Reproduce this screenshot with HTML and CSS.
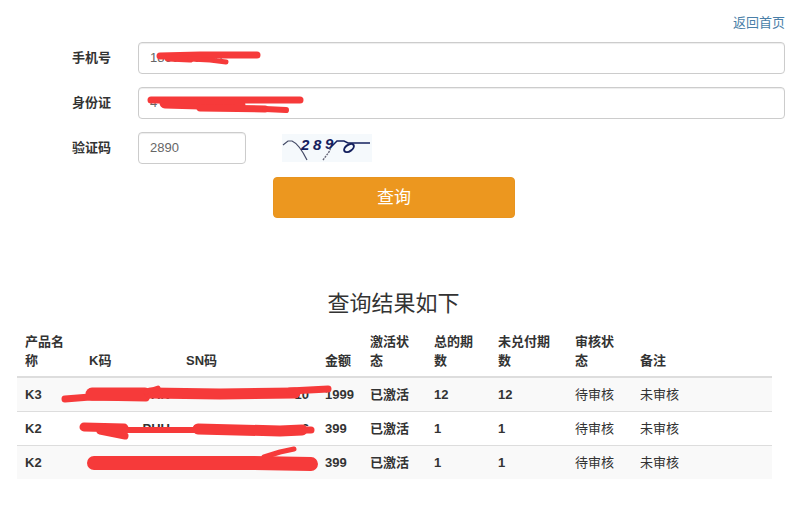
FILE: index.html
```html
<!DOCTYPE html>
<html lang="zh-CN">
    <head>
        <meta charset="utf-8">
        <title>查询结果</title>
        <link rel="stylesheet" href="styles.css">
    </head>
    <body>
        <main class="page">
            <div class="top-link"><a href="#">返回首页</a></div>

            <form class="query-form">
                <div class="form-row">
                    <label>手机号</label>
                    <input class="field" type="text" value="1860000000">
                </div>
                <div class="form-row">
                    <label>身份证</label>
                    <input class="field" type="text" value="4">
                </div>
                <div class="form-row">
                    <label>验证码</label>
                    <input class="field field-short" type="text" value="2890">
                    <svg class="captcha" width="90" height="28" viewBox="0 0 90 28">
                        <rect width="90" height="28" fill="#f5f9fc"></rect>
                        <path d="M1 11 L6 7 L10 7 Q17 10 25 26" fill="none" stroke="#444a66" stroke-width="1.2"></path>
                        <path d="M41 26 L47 18 L50 11" fill="none" stroke="#667" stroke-width="1.4" stroke-dasharray="2 1"></path>
                        <path d="M50 12 L55 7 L62 7 L66 9 L88 9" fill="none" stroke="#14205e" stroke-width="1.5"></path>
                        <ellipse cx="67" cy="14" rx="5.5" ry="3.2" transform="rotate(-35 67 14)" fill="none" stroke="#14205e" stroke-width="2"></ellipse>
                        <text class="captcha-text" x="19" y="16">2</text>
                        <text class="captcha-text" x="31" y="16">8</text>
                        <text class="captcha-text" x="43" y="15">9</text>
                    </svg>
                </div>
                <div class="form-submit">
                    <button class="btn-query" type="button">查询</button>
                </div>
            </form>

            <h2 class="result-title">查询结果如下</h2>

            <table class="result-table">
                <colgroup>
                    <col class="c-name">
                    <col class="c-k">
                    <col class="c-sn">
                    <col class="c-money">
                    <col class="c-active">
                    <col class="c-total">
                    <col class="c-left">
                    <col class="c-audit">
                    <col class="c-note">
                </colgroup>
                <thead>
                    <tr>
                        <th>产品名称</th>
                        <th>K码</th>
                        <th>SN码</th>
                        <th>金额</th>
                        <th>激活状态</th>
                        <th>总的期数</th>
                        <th>未兑付期数</th>
                        <th>审核状态</th>
                        <th>备注</th>
                    </tr>
                </thead>
                <tbody>
                    <tr>
                        <td class="strong">K3</td>
                        <td class="strong code">YIN</td>
                        <td class="strong code">10</td>
                        <td class="strong">1999</td>
                        <td class="strong">已激活</td>
                        <td class="strong">12</td>
                        <td class="strong">12</td>
                        <td>待审核</td>
                        <td>未审核</td>
                    </tr>
                    <tr>
                        <td class="strong">K2</td>
                        <td class="strong code">PHU</td>
                        <td class="strong code">6</td>
                        <td class="strong">399</td>
                        <td class="strong">已激活</td>
                        <td class="strong">1</td>
                        <td class="strong">1</td>
                        <td>待审核</td>
                        <td>未审核</td>
                    </tr>
                    <tr>
                        <td class="strong">K2</td>
                        <td class="strong code"></td>
                        <td class="strong code">2DIAN</td>
                        <td class="strong">399</td>
                        <td class="strong">已激活</td>
                        <td class="strong">1</td>
                        <td class="strong">1</td>
                        <td>待审核</td>
                        <td>未审核</td>
                    </tr>
                </tbody>
            </table>

            <!-- red marker strokes drawn over the private values -->
            <svg class="scribble" width="800" height="507" viewBox="0 0 800 507">
                <g fill="none" stroke="#f63a3a" stroke-linecap="round" stroke-linejoin="round">
                    <path stroke-width="7" d="M160 56 L200 55 L257 55"></path>
                    <path stroke-width="7" d="M168 58 L190 59"></path>
                    <path stroke-width="5" d="M190 59 L210 60 L226 62"></path>
                    <path stroke-width="7" d="M151 100 L180 100 L300 100"></path>
                    <path stroke-width="11" d="M165 103 L200 104 L240 105"></path>
                    <path stroke-width="7" d="M200 108 L265 109"></path>
                    <path stroke-width="6" d="M265 109 L286 110"></path>
                    <path stroke-width="7" d="M65 399 L90 397 L146 398"></path>
                    <path stroke-width="13" d="M92 394 L145 394"></path>
                    <path stroke-width="11" d="M150 393 L220 394 L295 393"></path>
                    <path stroke-width="7" d="M290 391 L328 389"></path>
                    <path stroke-width="5" d="M146 392 L158 388"></path>
                    <path stroke-width="9" d="M84 427 L124 428"></path>
                    <path stroke-width="7" d="M100 431 L125 436"></path>
                    <path stroke-width="6" d="M125 430 L195 430"></path>
                    <path stroke-width="11" d="M198 429 L280 431 L302 430"></path>
                    <path stroke-width="7" d="M298 430 L311 430"></path>
                    <path stroke-width="14" d="M94 463 L150 463 L250 463 L311 464"></path>
                    <path stroke-width="5" d="M264 457 L280 452 L294 449"></path>
                </g>
            </svg>
        </main>
    </body>
</html>
```

FILE: styles.css
```css
* {
    box-sizing: border-box;
}

body {
    margin: 0;
    background-color: #fff;
    color: #333;
    font-family: "Liberation Sans", "Noto Sans CJK SC", sans-serif;
    font-size: 13px;
}

.page {
    position: relative;
    width: 800px;
    height: 507px;
    overflow: hidden;
    padding: 15px 15px 0 17px;
}

.top-link {
    height: 27px;
    line-height: 16px;
    text-align: right;
}
.top-link a {
    color: #4a7fa8;
    text-decoration: none;
}

.form-row {
    display: flex;
    align-items: center;
    margin-bottom: 13px;
    padding-left: 55px;
}
.form-row label {
    width: 66px;
    padding-bottom: 3px;
    font-weight: bold;
}

.field {
    flex: 1;
    height: 32px;
    padding: 0 11px 2px;
    border: 1px solid #ccc;
    border-radius: 4px;
    background-color: #fff;
    color: #666;
    font-family: inherit;
    font-size: 13px;
    box-shadow: inset 0 1px 1px rgba(0, 0, 0, 0.075);
}
.field-short {
    flex: none;
    width: 108px;
}

.captcha {
    margin-left: 36px;
}
.captcha-text {
    fill: #14205e;
    font-family: "Liberation Sans", sans-serif;
    font-size: 15px;
    font-style: italic;
    font-weight: bold;
}

.form-submit {
    display: flex;
    padding-left: 256px;
}
.btn-query {
    width: 242px;
    height: 41px;
    padding: 0 0 4px;
    border: 1px solid #e8941f;
    border-radius: 4px;
    background-color: #ec971f;
    color: #fff;
    font-family: inherit;
    font-size: 17px;
}

.result-title {
    margin: 70px 0 0;
    padding-right: 15px;
    height: 31px;
    line-height: 31px;
    font-size: 22px;
    font-weight: normal;
    text-align: center;
}

.result-table {
    width: 755px;
    margin-top: 5px;
    border-collapse: collapse;
    table-layout: fixed;
}
.c-name { width: 64px; }
.c-k { width: 97px; }
.c-sn { width: 139px; }
.c-money { width: 45px; }
.c-active { width: 64px; }
.c-total { width: 64px; }
.c-left { width: 77px; }
.c-audit { width: 65px; }

.result-table th {
    padding: 8px 8px 6px;
    border-bottom: 2px solid #ddd;
    font-size: 13px;
    line-height: 19px;
    text-align: left;
    vertical-align: bottom;
}
.result-table td {
    height: 34px;
    padding: 0 8px;
    border-top: 1px solid #ddd;
    line-height: 19px;
    white-space: nowrap;
    font-size: 13px;
}
.result-table thead + tbody tr:first-child td {
    border-top: 0;
}
.result-table tbody tr:nth-child(odd) {
    background-color: #f9f9f9;
}
.result-table .strong {
    font-weight: bold;
}
.result-table .code {
    text-align: right;
    overflow: hidden;
}

.scribble {
    position: absolute;
    top: 0;
    left: 0;
    pointer-events: none;
}
```
